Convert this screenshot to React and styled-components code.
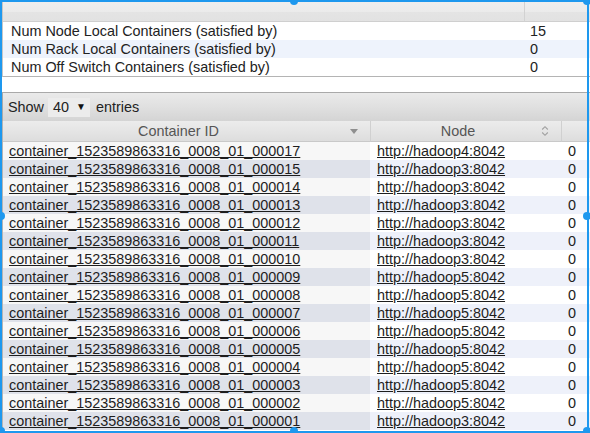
import React from 'react';
import styled, { createGlobalStyle } from 'styled-components';

const GlobalStyle = createGlobalStyle`
  html, body { margin: 0; padding: 0; background: #fff; overflow: hidden; }
  body {
    font-family: "Liberation Sans", Arial, sans-serif;
    font-size: 14.4px;
    color: #222;
  }
`;

const Page = styled.div`
  position: relative;
  width: 590px;
  height: 433px;
  overflow: hidden;
  box-sizing: border-box;
  padding: 2px 0 0 2px;
`;

const InfoTable = styled.table`
  width: 588px;
  table-layout: fixed;
  border-collapse: separate;
  border-spacing: 0;
  border-left: 1px solid #c6c6c6;
  border-bottom: 1px solid #b4b4b4;
`;

const InfoHead = styled.th`
  height: 19px;
  padding: 0;
  background: linear-gradient(to bottom, #eeeeee 0%, #ebebeb 50%, #e4e4e4 52%, #e2e2e2 100%);
  border-bottom: 1px solid #cfcfcf;
  border-left: ${(p) => (p.$divider ? '1px solid #d2d2d2' : 'none')};
`;

const InfoRow = styled.tr`
  background: ${(p) => (p.$shaded ? '#eef3fc' : '#fff')};
`;

const InfoCell = styled.td`
  height: 18px;
  line-height: 18px;
  padding: 0 0 0 ${(p) => (p.$value ? '6px' : '8px')};
  white-space: nowrap;
  overflow: hidden;
`;

const Wrapper = styled.div`
  margin-top: 15px;
  width: 600px;
`;

const Toolbar = styled.div`
  display: flex;
  align-items: center;
  height: 28px;
  padding-left: 5px;
  border-top: 1px solid #a9a9a9;
  border-left: 1px solid #a9a9a9;
  background: linear-gradient(to bottom, #eaeaea 0%, #e0e0e0 50%, #d4d4d4 100%);
  color: #222;
`;

const Select = styled.div`
  display: flex;
  align-items: center;
  justify-content: space-between;
  box-sizing: border-box;
  width: 42px;
  height: 19px;
  margin: 0 6px 0 4px;
  padding: 0 4px 0 5px;
  background: #ececec;
  font-size: 14.4px;
`;

const Caret = styled.span`
  font-size: 10px;
  line-height: 1;
  color: #111;
`;

const MainTable = styled.table`
  width: 590px;
  table-layout: fixed;
  border-collapse: separate;
  border-spacing: 0;
  border-left: 1px solid #b4b4b4;
`;

const HeadCell = styled.th`
  height: 20px;
  padding: 0 12px 0 4px;
  font-weight: normal;
  color: #555;
  background: linear-gradient(to bottom, #ececec 0%, #e4e4e4 55%, #dddddd 100%);
  border-bottom: 1px solid #c9c9c9;
  border-left: ${(p) => (p.$divider ? '1px solid #d0d0d0' : 'none')};
`;

const HeadInner = styled.div`
  display: flex;
  align-items: center;
`;

const HeadLabel = styled.span`
  flex: 1;
  text-align: center;
  white-space: nowrap;
`;

const Row = styled.tr``;

const Cell = styled.td`
  height: 18px;
  line-height: 18px;
  white-space: nowrap;
  overflow: hidden;
  background: ${(p) =>
    p.$sorted
      ? p.$shaded
        ? '#dfe2ea'
        : '#f7f7f7'
      : p.$shaded
      ? '#eef1fa'
      : '#ffffff'};
  padding: 0 0 0 ${(p) => (p.$pad ? p.$pad : '6px')};
`;

const Link = styled.a`
  color: #1e1e1e;
  text-decoration: underline;
`;

const Frame = styled.div`
  position: absolute;
  left: 0;
  top: 0;
  width: 589px;
  height: 433px;
  box-sizing: border-box;
  border: 2px solid #1e98ee;
  pointer-events: none;
`;

const Handle = styled.span`
  position: absolute;
  width: 8px;
  height: 8px;
  border-radius: 50%;
  background: #1e98ee;
  left: ${(p) => p.$x - 4}px;
  top: ${(p) => p.$y - 4}px;
  pointer-events: none;
`;

const SortDown = () => (
  <svg width="8" height="5" viewBox="0 0 8 5">
    <path d="M0 0 L8 0 L4 5 Z" fill="#8f8f8f" />
  </svg>
);

const SortBoth = () => (
  <svg width="8" height="12" viewBox="0 0 8 12">
    <path d="M1.2 4.5 L4 1.7 L6.8 4.5" fill="none" stroke="#a0a0a0" strokeWidth="1.1" />
    <path d="M1.2 7.5 L4 10.3 L6.8 7.5" fill="none" stroke="#a0a0a0" strokeWidth="1.1" />
  </svg>
);

const info = [
  ['Num Node Local Containers (satisfied by)', '15'],
  ['Num Rack Local Containers (satisfied by)', '0'],
  ['Num Off Switch Containers (satisfied by)', '0'],
];

const rows = [
  ['000017', 4], ['000015', 3], ['000014', 3], ['000013', 3], ['000012', 3],
  ['000011', 3], ['000010', 3], ['000009', 5], ['000008', 5], ['000007', 5],
  ['000006', 5], ['000005', 5], ['000004', 5], ['000003', 5], ['000002', 5],
  ['000001', 3],
];

const handles = [
  [294, 1], [587, 1], [1, 216], [587, 216], [1, 431], [294, 431], [587, 431],
];

export default function App() {
  return (
    <>
      <GlobalStyle />
      <Page>
        <InfoTable>
          <colgroup>
            <col style={{ width: '521px' }} />
            <col />
          </colgroup>
          <thead>
            <tr>
              <InfoHead />
              <InfoHead $divider />
            </tr>
          </thead>
          <tbody>
            {info.map(([label, value], i) => (
              <InfoRow key={label} $shaded={i === 1}>
                <InfoCell>{label}</InfoCell>
                <InfoCell $value>{value}</InfoCell>
              </InfoRow>
            ))}
          </tbody>
        </InfoTable>

        <Wrapper>
          <Toolbar>
            Show
            <Select>
              <span>40</span>
              <Caret>▼</Caret>
            </Select>
            entries
          </Toolbar>
          <MainTable>
            <colgroup>
              <col style={{ width: '367px' }} />
              <col style={{ width: '191px' }} />
              <col />
            </colgroup>
            <thead>
              <tr>
                <HeadCell>
                  <HeadInner>
                    <HeadLabel>Container ID</HeadLabel>
                    <SortDown />
                  </HeadInner>
                </HeadCell>
                <HeadCell $divider>
                  <HeadInner>
                    <HeadLabel>Node</HeadLabel>
                    <SortBoth />
                  </HeadInner>
                </HeadCell>
                <HeadCell $divider />
              </tr>
            </thead>
            <tbody>
              {rows.map(([id, node], i) => {
                const shaded = i % 2 === 1;
                return (
                  <Row key={id}>
                    <Cell $sorted $shaded={shaded}>
                      <Link href="#">{`container_1523589863316_0008_01_${id}`}</Link>
                    </Cell>
                    <Cell $shaded={shaded} $pad="7px">
                      <Link href="#">{`http://hadoop${node}:8042`}</Link>
                    </Cell>
                    <Cell $shaded={shaded} $pad="7px">0</Cell>
                  </Row>
                );
              })}
            </tbody>
          </MainTable>
        </Wrapper>

        <Frame />
        {handles.map(([x, y]) => (
          <Handle key={`${x}-${y}`} $x={x} $y={y} />
        ))}
      </Page>
    </>
  );
}
